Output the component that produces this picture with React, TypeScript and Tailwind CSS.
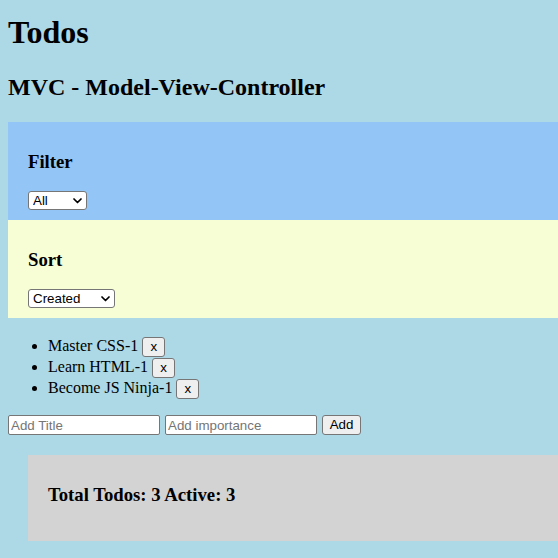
import { useState } from "react";

const initialTodos = [
  { id: 1, title: "Master CSS", importance: 1 },
  { id: 2, title: "Learn HTML", importance: 1 },
  { id: 3, title: "Become JS Ninja", importance: 1 },
];

const controlFont = "font-['Liberation_Sans',Arial,sans-serif] text-[13.33px]";

const Select = ({ options, width }: { options: string[]; width: string }) => {
  return (
    <div className="relative flex">
      <select
        className={`${controlFont} ${width} block h-[19px] appearance-none bg-white border border-[#767676] rounded-[3px] pl-[4px] pr-4 text-black leading-[17px] outline-none`}
      >
        {options.map((o) => (
          <option key={o}>{o}</option>
        ))}
      </select>
      <svg
        className="pointer-events-none absolute right-[5px] top-1/2 -translate-y-1/2"
        width="9"
        height="6"
        viewBox="0 0 9 6"
        fill="none"
      >
        <path d="M1 1l3.5 3.5L8 1" stroke="#000" strokeWidth="1.7" strokeLinecap="round" strokeLinejoin="round" />
      </svg>
    </div>
  );
};

const App = () => {
  const [todos, setTodos] = useState(initialTodos);
  const active = todos.length;

  return (
    <div className="min-h-[558px] bg-[#add8e6] pl-2 pt-[14px] pb-[17px] font-['Liberation_Serif','Times_New_Roman',serif] text-black">
      <h1 className="text-[32px] font-bold leading-[37px]">Todos</h1>
      <h2 className="mt-[22px] mb-[21px] text-[24px] font-bold leading-[28px]">MVC - Model-View-Controller</h2>

      {/* Filter */}
      <div className="bg-[#93c6f7] px-5 py-[10px]">
        <h3 className="mt-[19px] mb-[19px] text-[18.72px] font-bold leading-[21px]">Filter</h3>
        <div className="flex">
          <Select options={["All", "Active", "Done"]} width="w-[59px]" />
        </div>
      </div>

      {/* Sort */}
      <div className="bg-[#f7fed5] px-5 py-[10px]">
        <h3 className="mt-[19px] mb-[19px] text-[18.72px] font-bold leading-[21px]">Sort</h3>
        <div className="flex">
          <Select options={["Created", "Importance", "Title"]} width="w-[87px]" />
        </div>
      </div>

      {/* List */}
      <ul className="mt-[17px] mb-0 list-disc pl-10 text-[16px]">
        {todos.map((t) => (
          <li key={t.id} className="h-[21px] leading-[21px]">
            {t.title}-{t.importance}{" "}
            <button
              onClick={() => setTodos(todos.filter((x) => x.id !== t.id))}
              className={`${controlFont} h-[20px] w-[23px] bg-[#efefef] border border-[#767676] rounded-[3px] leading-[16px] align-baseline`}
            >
              x
            </button>
          </li>
        ))}
      </ul>

      {/* Add form */}
      <div className="mt-[17px] flex items-center gap-[5px]">
        <input
          placeholder="Add Title"
          className={`${controlFont} h-[20px] w-[152px] bg-white border border-[#767676] rounded-[2px] px-[2px] placeholder:text-[#757575] outline-none`}
        />
        <input
          placeholder="Add importance"
          className={`${controlFont} h-[20px] w-[152px] bg-white border border-[#767676] rounded-[2px] px-[2px] placeholder:text-[#757575] outline-none`}
        />
        <button
          className={`${controlFont} h-[20px] w-[39px] bg-[#efefef] border border-[#767676] rounded-[3px] leading-[16px]`}
        >
          Add
        </button>
      </div>

      {/* Footer */}
      <div className="mt-5 ml-5 bg-[#d3d3d3] px-5 py-[10px]">
        <h3 className="mt-[19px] mb-[26px] text-[18.72px] font-bold leading-[21px]">
          Total Todos: {todos.length} Active: {active}
        </h3>
      </div>
    </div>
  );
};

export default App;
